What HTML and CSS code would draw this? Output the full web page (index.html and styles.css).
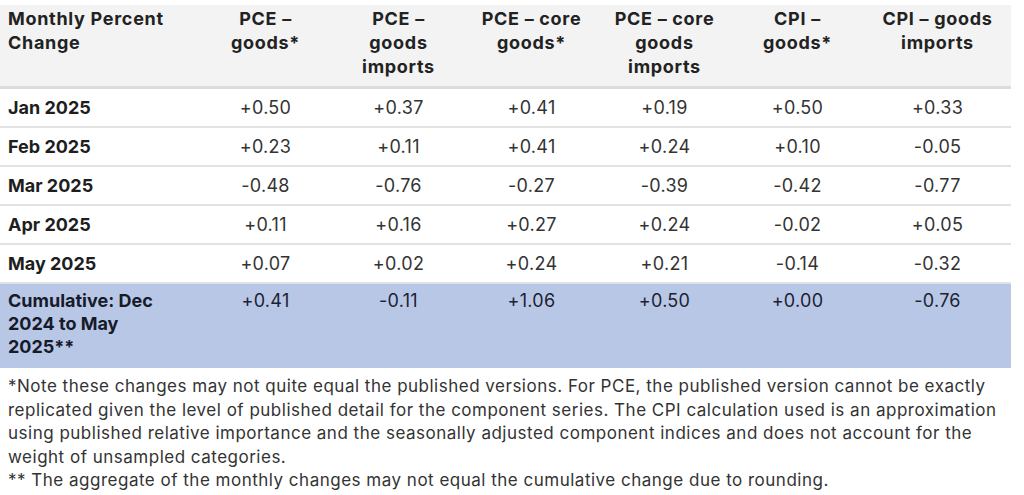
FILE: index.html
```html
<!DOCTYPE html>
<html lang="en">
<head>
<meta charset="utf-8">
<link rel="stylesheet" href="styles.css">
</head>
<body>
<div class="page">
  <table class="data">
    <colgroup>
      <col class="c-label"><col class="c-num"><col class="c-num"><col class="c-num"><col class="c-num"><col class="c-num"><col class="c-last">
    </colgroup>
    <thead>
      <tr>
        <th class="label">Monthly Percent Change</th>
        <th>PCE –<br>goods*</th>
        <th>PCE –<br>goods<br>imports</th>
        <th>PCE – core<br>goods*</th>
        <th>PCE – core<br>goods<br>imports</th>
        <th>CPI –<br>goods*</th>
        <th>CPI – goods<br>imports</th>
      </tr>
    </thead>
    <tbody>
      <tr><td class="label">Jan 2025</td><td>+0.50</td><td>+0.37</td><td>+0.41</td><td>+0.19</td><td>+0.50</td><td>+0.33</td></tr>
      <tr><td class="label">Feb 2025</td><td>+0.23</td><td>+0.11</td><td>+0.41</td><td>+0.24</td><td>+0.10</td><td>-0.05</td></tr>
      <tr><td class="label">Mar 2025</td><td>-0.48</td><td>-0.76</td><td>-0.27</td><td>-0.39</td><td>-0.42</td><td>-0.77</td></tr>
      <tr><td class="label">Apr 2025</td><td>+0.11</td><td>+0.16</td><td>+0.27</td><td>+0.24</td><td>-0.02</td><td>+0.05</td></tr>
      <tr><td class="label">May 2025</td><td>+0.07</td><td>+0.02</td><td>+0.24</td><td>+0.21</td><td>-0.14</td><td>-0.32</td></tr>
      <tr class="cumulative"><td class="label">Cumulative: Dec<br>2024 to May<br>2025**</td><td>+0.41</td><td>-0.11</td><td>+1.06</td><td>+0.50</td><td>+0.00</td><td>-0.76</td></tr>
    </tbody>
  </table>
  <div class="notes">
    <p>*Note these changes may not quite equal the published versions. For PCE, the published version cannot be exactly replicated given the level of published detail for the component series. The CPI calculation used is an approximation using published relative importance and the seasonally adjusted component indices and does not account for the weight of unsampled categories.</p>
    <p>** The aggregate of the monthly changes may not equal the cumulative change due to rounding.</p>
  </div>
</div>
</body>
</html>
```

FILE: styles.css
```css
html, body {
  margin: 0;
  padding: 0;
  background: #ffffff;
}
body {
  font-family: "Inter", "Liberation Sans", sans-serif;
  color: #2b2b2b;
}
.page {
  padding-top: 5px;
  width: 1011px;
}
.data {
  width: 1011px;
  border-collapse: collapse;
  table-layout: fixed;
}
.c-label { width: 199px; }
.c-num { width: 133px; }
.c-last { width: 147px; }
.data th {
  background: #f3f3f3;
  font-weight: 700;
  font-size: 18px;
  line-height: 24px;
  letter-spacing: 0.7px;
  color: #222;
  text-align: center;
  vertical-align: top;
  padding: 2px 2px 7px;
  height: 71px;
  border-bottom: 3px solid #dcdcdc;
}
.data th.label { text-align: left; padding-left: 8px; }
.data td {
  font-size: 18px;
  line-height: 24px;
  letter-spacing: 0.3px;
  text-align: center;
  vertical-align: top;
  padding: 7px 4px 6px;
  border-bottom: 2px solid #e2e2e2;
  color: #333;
}
.data td.label {
  text-align: left;
  padding-left: 8px;
  letter-spacing: 0;
  font-weight: 700;
  color: #1e1e1e;
}
.cumulative td {
  background: #b9c7e6;
  color: #1c2233;
  line-height: 23px;
  padding-top: 5px;
  padding-bottom: 10px;
  border-bottom: none;
}
.cumulative td.label { color: #161b2a; }
.notes {
  padding: 7px 8px 0;
  font-size: 17px;
  line-height: 23.5px;
  letter-spacing: 0.5px;
  color: #333;
}
.notes p { margin: 0; }
```
